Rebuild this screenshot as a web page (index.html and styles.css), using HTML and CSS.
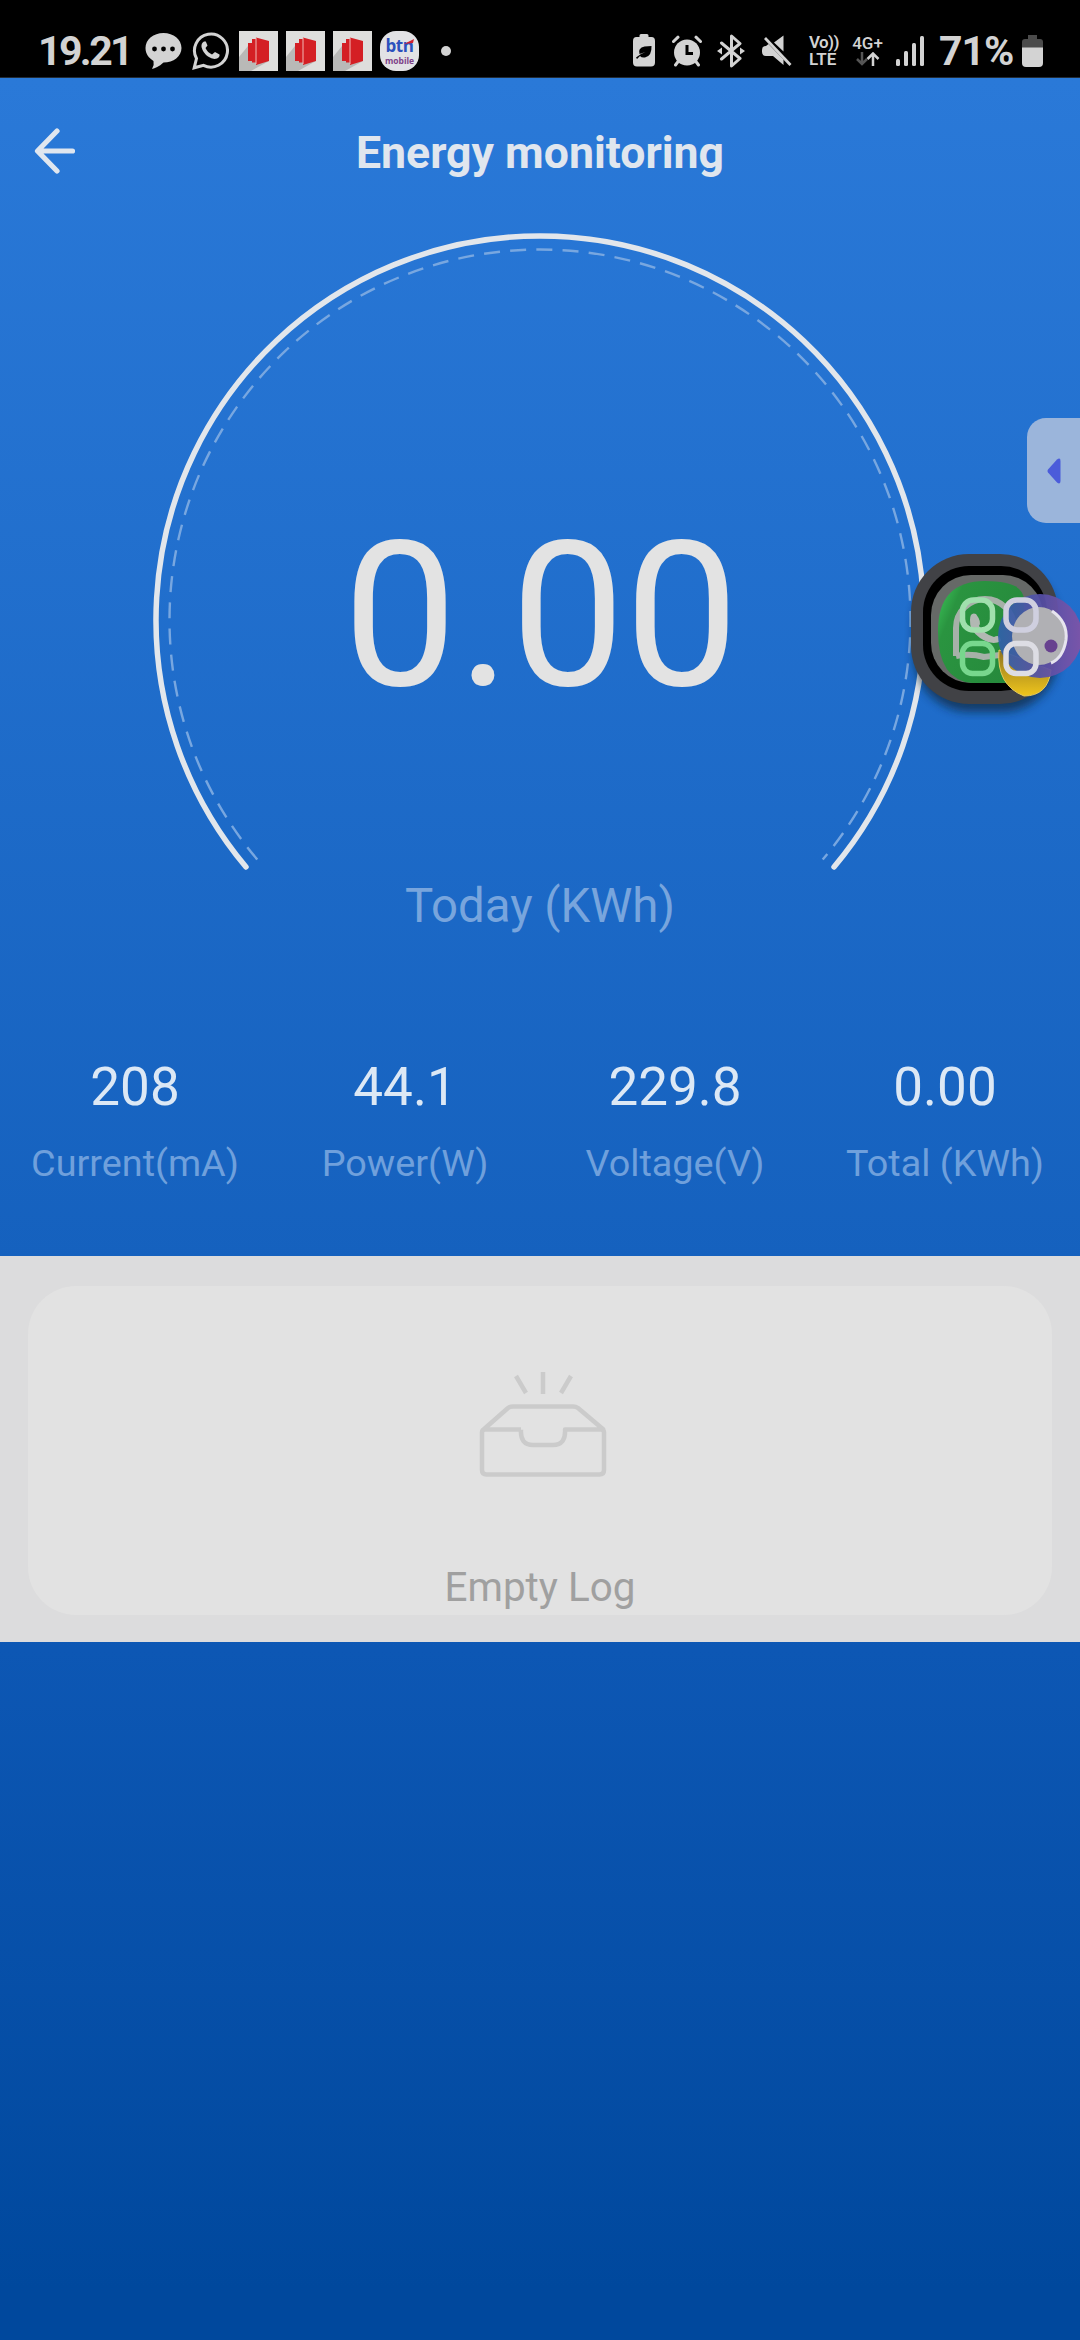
FILE: index.html
```html
<!DOCTYPE html>
<html lang="en">
<head>
<meta charset="utf-8">
<title>Energy monitoring</title>
<link rel="stylesheet" href="styles.css">
</head>
<body>
<div class="screen">
  <div class="status">
    <span class="clock">19.21</span>
    <div class="notifications">
      <svg width="37" height="37" viewBox="0 0 37 37"><path fill="#d3d3d3" d="M18.500 1C28.500 1 36.500 7.500 36.500 16S28.500 30.500 18.500 30.500C14 34.500 10 36.500 7 37Q9.500 33 8.500 29C4 26 .5 22 .5 16C.5 7.500 8.500 1 18.500 1Z"/><circle cx="9.500" cy="17" r="2.400"/><circle cx="18.500" cy="17" r="2.400"/><circle cx="27.500" cy="17" r="2.400"/></svg>
      <svg width="37" height="39" viewBox="0 0 37 39"><path fill="none" stroke="#d3d3d3" stroke-width="3" d="M2.200 36.800L4.500 27.500A16.500 16.500 0 1 1 11.500 34.300Z"/><path fill="#d3d3d3" d="M12 10.500Q9 12 9.500 16Q11 22 16 25.500Q21 29 25 27.500Q28 26 27.500 23.500L23 21L20 23.500Q15.500 21.500 13.500 17L15.500 14.500L13.800 10.500Z"/></svg>
      <svg class="tile" width="39" height="40" viewBox="0 0 39 40"><use href="#door"/></svg>
      <svg class="tile" width="39" height="40" viewBox="0 0 39 40"><use href="#door"/></svg>
      <svg class="tile" width="39" height="40" viewBox="0 0 39 40"><use href="#door"/></svg>
      <span class="btn-logo"><svg class="tick" width="10" height="5" viewBox="0 0 10 5"><path fill="#cf2030" d="M0 5L10 0L9 4Z"/></svg><b>btn</b><i>mobile</i></span>
      <span class="more"></span>
    </div>
    <div class="system">
      <svg width="22" height="33" viewBox="0 0 22 33"><path fill="#d3d3d3" d="M6.500 3V1.500Q6.500 0 8 0H14Q15.500 0 15.500 1.500V3H18.500Q22 3 22 7V28.500Q22 32.500 18 32.500H4Q0 32.500 0 28.500V7Q0 3 3.500 3Z"/><path d="M18.500 12Q19 22 12 23.500Q8.500 24 7 22L4 25L3 23.500L8 20L12.500 18L6.500 20Q4.500 14 11.500 12.500Z"/></svg>
      <svg class="alarm" width="30" height="32" viewBox="0 0 30 32"><circle cx="15" cy="17.500" r="13" fill="#d3d3d3"/><g stroke="#d3d3d3" stroke-width="3" stroke-linecap="round" fill="none"><path d="M1.500 6.500L6 2.200M28.500 6.500L24 2.200M6.500 26L3.500 30M23.500 26L26.500 30"/><path stroke="#000" d="M15 10V18.500H21" stroke-linecap="butt"/></g></svg>
      <svg class="bt" width="28" height="34" viewBox="0 0 28 34"><g stroke="#d3d3d3" stroke-width="3" stroke-linejoin="round" stroke-linecap="round" fill="none"><path d="M4.500 9L23 24.500L14.500 32V2L23 9.500L4.500 25"/></g><g fill="#d3d3d3"><path d="M0 17L5 13.500V20.500ZM28 17L23 13.500V20.500Z"/></g></svg>
      <svg class="mute" width="30" height="31" viewBox="0 0 30 31"><path fill="#d3d3d3" d="M4 11L6.500 9L21.500 24.500V30L11 21H4Q0 21 0 17V15Q0 11 4 11ZM21.500 .5V16.500L12 7.500Z"/><path d="M3 3L28.500 30" stroke="#d3d3d3" stroke-width="2.800"/></svg>
      <span class="volte"><span class="vo">Vo))</span><span>LTE</span></span>
      <span class="net"><span>4G+</span><svg width="24" height="14" viewBox="0 0 24 14" fill="none" stroke-width="2.500"><path stroke="#555" d="M6 0V12M1 7L6 12L11 7"/><path stroke="#d3d3d3" d="M17 14V2M11.500 7L17 1.500L22.500 7"/></svg></span>
      <svg class="signal" width="28" height="30" viewBox="0 0 28 30" fill="#d3d3d3"><rect x="0" y="23" width="4" height="7" rx="1.500"/><rect x="8" y="15" width="4" height="15" rx="1.500"/><rect x="16" y="7" width="4" height="23" rx="1.500"/><rect x="24" y="0" width="4" height="30" rx="1.500"/></svg>
      <span class="percent">71%</span>
      <svg width="21" height="32" viewBox="0 0 21 32"><path fill="#4b4b4b" d="M6 4V0H15V4H18Q21 4 21 7V13H0V7Q0 4 3 4Z"/><path fill="#d3d3d3" d="M0 12.500H21V28Q21 32 17 32H4Q0 32 0 28Z"/></svg>
    </div>
  </div>

  <div class="header">
    <svg class="back" width="42" height="46" viewBox="0 0 42 46" fill="none" stroke="#dfe6ef" stroke-width="5.200" stroke-linecap="round" stroke-linejoin="round"><path d="M23 3L3.500 23L23 43M4 23H38.500"/></svg>
    <h1>Energy monitoring</h1>
  </div>

  <div class="gauge">
    <svg class="dial" width="780" height="660" viewBox="150 230 780 660" fill="none">
      <path d="M246 867A384 384 0 1 1 834 867" stroke="#e2e6eb" stroke-width="5.500" stroke-linecap="round"/>
      <path d="M257.300 859.500A370.500 370.500 0 1 1 822.700 859.500" stroke="#78a7e0" stroke-width="2.400" stroke-dasharray="16 10.200"/>
    </svg>
    <div class="reading">0.00</div>
    <div class="caption">Today (KWh)</div>
  </div>

  <div class="stats">
    <div class="stat"><b>208</b><span>Current(mA)</span></div>
    <div class="stat"><b>44.1</b><span>Power(W)</span></div>
    <div class="stat"><b>229.8</b><span>Voltage(V)</span></div>
    <div class="stat"><b>0.00</b><span>Total (KWh)</span></div>
  </div>

  <div class="log">
    <div class="card">
      <svg class="tray" width="128" height="108" viewBox="0 0 128 108" fill="none" stroke="#cbcbcb" stroke-width="4.500" stroke-linejoin="round"><path d="M37 5L47 22M64 1V23M92 5L82 22M4 59L29 37Q31 35.500 34 35.500H94Q97 35.500 99 37L125 59M42 58.500H6Q3 58.500 3 61.500V99Q3 103.500 7.500 103.500H120.500Q125 103.500 125 99V61.500Q125 58.500 122 58.500H86Q87 74 74 74H54Q41 74 42 58.500"/></svg>
      <p>Empty Log</p>
    </div>
  </div>

  <div class="edge-handle"><svg width="14" height="26" viewBox="0 0 14 26"><path fill="#4b5cda" d="M1 11.500L10 1.500Q13.500-1 13.500 3V23Q13.500 27 10 24.500L1 14.500Q0 13 1 11.500Z"/></svg></div>
  <svg class="bubble" width="180" height="180" viewBox="900 540 180 180">
    <defs>
      <filter id="soft" x="-20%" y="-20%" width="140%" height="140%"><feGaussianBlur stdDeviation="5"/></filter>
      <linearGradient id="ring" x1="0" y1="0" x2="1" y2="0"><stop offset="0" stop-color="#2f62a8"/><stop offset=".5" stop-color="#5550a8"/><stop offset="1" stop-color="#8153a6"/></linearGradient>
      <linearGradient id="green" x1="0" y1="0" x2="1" y2=".5"><stop offset="0" stop-color="#3ecb5c"/><stop offset=".25" stop-color="#2a9440"/><stop offset="1" stop-color="#268a3c"/></linearGradient>
      <linearGradient id="gold" x1="0" y1="0" x2="0" y2="1"><stop offset="0" stop-color="#8d7220"/><stop offset="1" stop-color="#efc51c"/></linearGradient>
    </defs>
    <rect x="914" y="566" width="144" height="146" rx="56" fill="#123" opacity=".65" filter="url(#soft)"/>
    <rect x="911" y="554" width="147" height="150" rx="58" fill="#414246"/>
    <rect x="923" y="566" width="124" height="125" rx="46" fill="#000"/>
    <rect x="931" y="575" width="112" height="108" rx="40" fill="#666967"/>
    <path fill="url(#green)" d="M938 631Q938 581 985 581Q1024 581 1024 600V683H972Q938 680 938 631Z"/>
    <path fill="none" stroke="#a6b1a8" stroke-width="6" d="M956 656V628A29 29 0 0 1 1014 628M956 656Q970 653 984 657L1000 655"/>
    <path fill="#b2b8b3" d="M970 620Q970 612 976 614Q982 622 979 626Q984 634 994 637Q1000 634 1001 641Q992 646 980 638Q969 630 970 620Z"/>
    <path fill="url(#gold)" stroke="#e5c95a" stroke-width="1" d="M999 650Q996 685 1024 696Q1048 696 1051 670Z"/>
    <circle cx="1040" cy="636" r="42" fill="url(#ring)" opacity=".93"/>
    <ellipse cx="1039" cy="636" rx="27" ry="29" fill="#b0b0b4"/>
    <path fill="none" stroke="#e6e4ee" stroke-width="3" d="M1052 611Q1068 622 1066 640Q1063 658 1051 663"/>
    <circle cx="1051" cy="646" r="6.500" fill="#67418f"/>
    <g fill="none" stroke-width="5.500">
      <rect x="962.500" y="600" width="30" height="30" rx="11" stroke="#a0e0ad"/>
      <rect x="962.500" y="643.500" width="30" height="30" rx="10" stroke="#78d78d"/>
      <rect x="1006" y="600" width="30" height="30" rx="11" stroke="#cfcfdf"/>
      <rect x="1006" y="643.500" width="30" height="30" rx="10" stroke="#dddde4"/>
    </g>
  </svg>
</div>
<svg class="symbols" width="0" height="0"><symbol id="door" viewBox="0 0 39 40"><rect width="39" height="40" fill="#dededc"/><path fill="#b9b9b7" d="M9 15L0 26V40H12L30 30Z"/><path fill="#d41f24" d="M9 12H13V8H17V6.500L30 10V30L17 34V31.500H13V30H9Z"/><path d="M17 6.500V33" stroke="#f1b9b5" stroke-width="1"/></symbol></svg>
</body>
</html>
```
FILE: styles.css
```css
* { box-sizing: border-box; }
body { margin: 0; font-family: Roboto, "Noto Sans", sans-serif; }
.screen {
  position: relative;
  width: 1080px;
  height: 2340px;
  overflow: hidden;
  display: flex;
  flex-direction: column;
  background: linear-gradient(180deg, #2a79d8 80px, #1561be 1260px, #0d57b4 1650px, #00489d 2290px, #00489d 100%);
}
.symbols { position: absolute; }
.status {
  height: 78px;
  flex: none;
  background: #000;
  border-bottom: 1px solid #222b35;
  color: #d3d3d3;
  display: flex;
  align-items: center;
  padding: 24px 37px 0 38px;
}
.clock, .percent { font-weight: 700; font-size: 41px; line-height: 44px; letter-spacing: -2.6px; }
.clock { width: 107px; }
.notifications { display: flex; align-items: center; gap: 10px; height: 41px; }
.tile { margin-right: -2px; }
.btn-logo {
  position: relative;
  width: 39px; height: 40px; border-radius: 16px; background: #e2e2e5;
  display: flex; flex-direction: column; align-items: center;
  font-family: "Open Sans", sans-serif; color: #2b50bd;
}
.btn-logo b { font-size: 17px; line-height: 20px; margin-top: 5px; letter-spacing: -.5px; }
.btn-logo i { font-size: 8.5px; font-style: normal; font-weight: 700; line-height: 10px; color: #7d3f88; }
.tick { position: absolute; right: 5px; top: 8px; }
.more { width: 10px; height: 10px; border-radius: 50%; background: #d3d3d3; margin-left: 12px; }
.system { display: flex; align-items: center; margin-left: auto; height: 41px; }
.alarm { margin-left: 17px; }
.bt { margin-left: 15px; }
.mute { margin-left: 17px; }
.volte { width: 31px; margin-left: 17px; display: flex; flex-direction: column; font-size: 17px; font-weight: 600; line-height: 17px; }
.vo { letter-spacing: -.6px; }
.net { width: 31px; margin-left: 12px; display: flex; flex-direction: column; align-items: center; font-size: 17px; font-weight: 500; line-height: 17px; }
.signal { margin-left: 13px; }
.percent { width: 83px; margin-left: 15px; letter-spacing: -1px; white-space: nowrap; }
.header { height: 152px; flex: none; display: grid; grid-template-columns: 109px 1fr 109px; align-items: center; }
.back { margin-left: 34px; margin-top: -7px; }
.header h1 { margin: -3px 0 0; text-align: center; font-size: 44.6px; font-weight: 700; line-height: 52px; color: #e0e6ee; }
.gauge { height: 820px; flex: none; display: grid; grid-template-columns: 1fr; justify-items: center; grid-template-rows: 296px 184px 224px; }
.dial { grid-area: 1 / 1 / 4 / 2; }
.reading { grid-area: 2 / 1; font-size: 203px; line-height: 180px; color: #e3e3e3; padding-left: 2px; }
.caption { grid-area: 3 / 1; align-self: end; font-size: 47.4px; line-height: 56px; color: #78a5dd; }
.stats { height: 206px; flex: none; padding-top: 5px; display: grid; grid-template-columns: repeat(4, 270px); }
.stat { display: flex; flex-direction: column; align-items: center; gap: 21px; }
.stat b { font-weight: 400; font-size: 53px; line-height: 64px; color: #dce8f5; }
.stat span { font-size: 37.8px; line-height: 46px; color: #6fa0dc; }
.log { height: 386px; flex: none; background: #dcdcdd; padding: 30px 28px 27px; }
.card { height: 100%; border-radius: 48px; background: #e2e2e2; display: flex; flex-direction: column; align-items: center; justify-content: space-between; padding: 85px 0 3px; }
.tray { margin-left: 6px; }
.card p { margin: 0; font-size: 40.4px; line-height: 48px; color: #a0a0a0; }
.edge-handle { position: absolute; left: 1027px; top: 418px; width: 53px; height: 105px; border-radius: 19px 0 0 19px; background: #9bb5db; padding: 40px 0 0 20px; }
.bubble { position: absolute; left: 900px; top: 540px; }
```
